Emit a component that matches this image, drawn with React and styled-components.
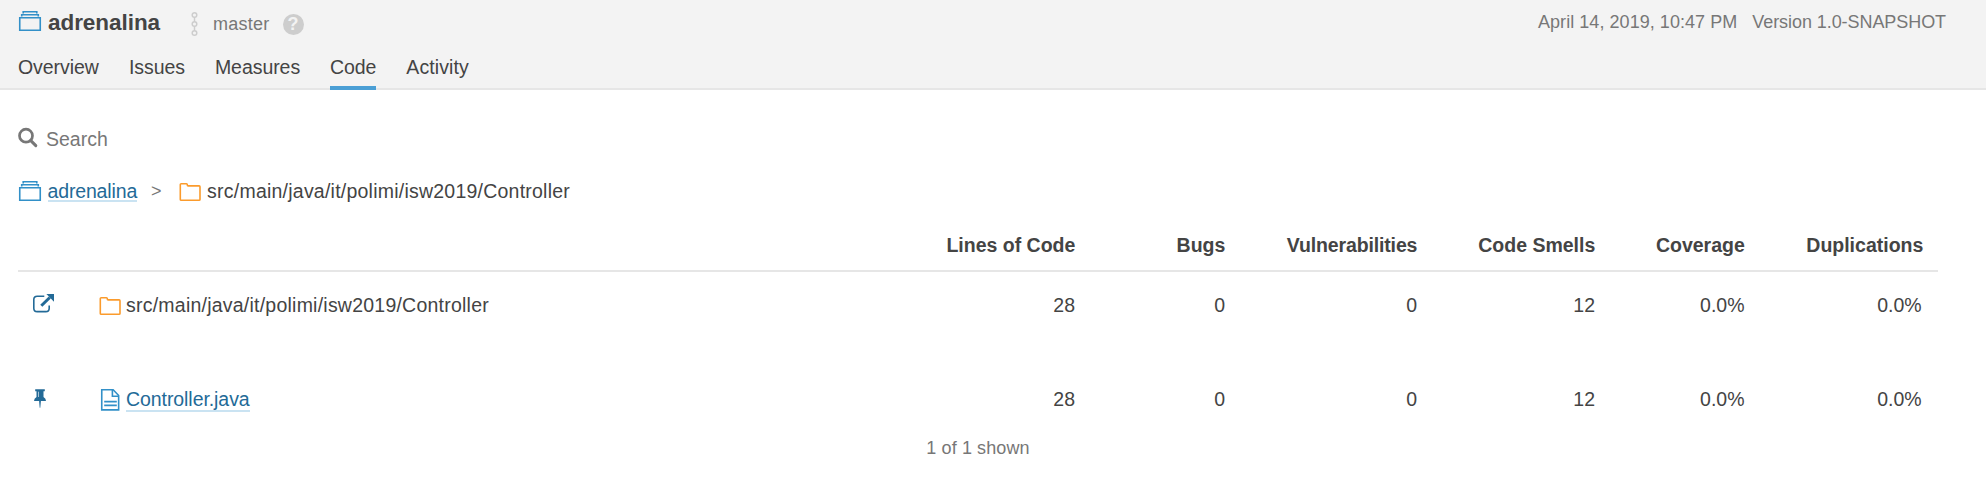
import React from "react";
import styled, { createGlobalStyle } from "styled-components";

const GlobalStyle = createGlobalStyle`
  *, *::before, *::after { box-sizing: border-box; }
  body {
    margin: 0;
    background: #fff;
    color: #444;
    font-family: "Liberation Sans", Arial, sans-serif;
    font-size: 19.5px;
    line-height: 24px;
  }
`;

const Header = styled.header`
  display: flex;
  flex-direction: column;
  justify-content: space-between;
  height: 90px;
  padding: 9px 40px 0 18px;
  background: #f3f3f3;
  border-bottom: 2px solid #e6e6e6;
`;

const HeaderTop = styled.div`
  display: flex;
  align-items: flex-start;
`;

const Title = styled.h1`
  margin: 0 31px 0 6px;
  font-size: 22.5px;
  font-weight: 700;
  line-height: 27px;
  letter-spacing: -0.05px;
`;

const Branch = styled.div`
  display: flex;
  align-items: center;
  padding-top: 3px;
  color: #777;
  font-size: 18px;
  letter-spacing: 0.25px;
`;

const BranchName = styled.span`
  margin: 0 13px 0 15px;
`;

const HelpBadge = styled.span`
  width: 21px;
  height: 21px;
  border-radius: 50%;
  background: #cdcdcd;
  color: #f3f3f3;
  font-size: 18px;
  font-weight: 700;
  line-height: 21px;
  letter-spacing: 0;
  text-align: center;
`;

const Meta = styled.div`
  display: flex;
  gap: 15px;
  margin-left: auto;
  padding-top: 1px;
  color: #777;
  font-size: 18px;
`;

const MetaItem = styled.span`
  letter-spacing: ${(p) => p.$track || "0.05px"};
`;

const Tabs = styled.nav`
  display: flex;
  gap: 30px;
  margin-bottom: -2px;
`;

const Tab = styled.a`
  padding-bottom: 7px;
  border-bottom: 4px solid ${(p) => (p.$active ? "#4b9fd5" : "transparent")};
  letter-spacing: ${(p) => p.$track || "0"};
`;

const Content = styled.main`
  padding: 37px 48px 0 18px;
`;

const SearchRow = styled.div`
  display: flex;
  gap: 4px;
  color: #777;
`;

const Breadcrumbs = styled.div`
  display: flex;
  margin-top: 28px;
`;

const Separator = styled.span`
  width: 41px;
  padding-left: 14px;
  color: #777;
  font-size: 18px;
`;

const Link = styled.a`
  height: ${(p) => p.$height};
  margin-top: 1px;
  margin-left: ${(p) => p.$gap};
  line-height: 22px;
  color: #236a97;
  border-bottom: 2px solid #cae3f2;
  letter-spacing: ${(p) => p.$track || "-0.13px"};
`;

const Path = styled.span`
  margin-left: ${(p) => p.$gap || "4px"};
  letter-spacing: 0.23px;
`;

const Table = styled.div`
  margin-top: 30px;
`;

const Row = styled.div`
  display: grid;
  grid-template-columns: 80px 1fr 150px 150px 192px 178px 149.5px 178.5px;
  align-items: center;
  height: 66px;
`;

const HeadRow = styled(Row)`
  align-items: start;
  height: 39px;
  border-bottom: 2px solid #e6e6e6;
  font-weight: 700;
`;

const Spacer = styled.div`
  height: 28px;
`;

const ActionCell = styled.div`
  display: flex;
  padding-left: 14px;
`;

const NameCell = styled.div`
  display: flex;
`;

const HeadCell = styled.div`
  padding-right: 14.7px;
  text-align: right;
  letter-spacing: ${(p) => p.$track || "0"};
`;

const ValueCell = styled.div`
  padding-right: ${(p) => p.$pad || "15px"};
  text-align: right;
`;

const Footer = styled.footer`
  margin-top: 4px;
  color: #777;
  font-size: 18px;
  letter-spacing: 0.1px;
  text-align: center;
`;

const Icon = styled.svg`
  display: block;
  flex: none;
  overflow: visible;
`;

const ProjectIcon = () => (
  <Icon width="24" height="24" viewBox="0 0 24 24" fill="none" stroke="#3290c8" strokeWidth="1.6">
    <path d="M1.75 8.75h20.5v12.5H1.75z" />
    <path d="M3.7 7.4V5.8h16.6v1.6" />
    <path d="M5.2 4.6V2.8h13.6v1.8" />
  </Icon>
);

const FolderIcon = () => (
  <Icon width="24" height="24" viewBox="0 0 24 24" fill="none" stroke="#fb9b2c" strokeWidth="1.6">
    <path d="M2.3 5.6q0-.9.9-.9h5.2q.9 0 .9.9v.5q0 .8.8.8h11q.9 0 .9.9v12.6q0 .9-.9.9H3.2q-.9 0-.9-.9z" />
  </Icon>
);

const FileIcon = () => (
  <Icon width="24" height="24" viewBox="0 0 24 24" fill="none" stroke="#3290c8" strokeWidth="1.6">
    <path d="M3.75 2.8h11.4l5.5 5.7v14.4H3.75z" />
    <path d="M14.4 3v6.3h6M6.2 14.6h12.6M6.2 18.4h12.6" />
  </Icon>
);

const SearchIcon = () => (
  <Icon width="24" height="24" viewBox="0 0 24 24" fill="none" stroke="#777">
    <circle cx="8" cy="8.7" r="6.5" strokeWidth="2.7" />
    <path d="M12.8 13.6l5 5" strokeWidth="3" strokeLinecap="round" />
  </Icon>
);

const BranchIcon = () => (
  <Icon width="7" height="24" viewBox="0 0 7 24" fill="none" stroke="#cdcdcd" strokeWidth="1.5">
    <circle cx="3.5" cy="3" r="2.3" />
    <circle cx="3.5" cy="12" r="2.3" />
    <circle cx="3.5" cy="21" r="2.3" />
    <path d="M3.5 5.3v4.4M3.5 14.3v4.4" />
  </Icon>
);

const OpenIcon = () => (
  <Icon width="24" height="24" viewBox="0 0 24 24" fill="none" stroke="#236a97">
    <path
      d="M12.3 3.2H5.2q-3.4 0-3.4 3.4v8.6q0 3.4 3.4 3.4h8.6q3.4 0 3.4-3.4v-2.6"
      strokeWidth="1.6"
    />
    <path d="M9.3 12.8l8.5-8.3" strokeWidth="3" />
    <path d="M14.4 1.1H22V8.7z" fill="#236a97" stroke="none" />
  </Icon>
);

const PinIcon = () => (
  <Icon width="24" height="24" viewBox="0 0 24 24" fill="#236a97">
    <path d="M3.2 2.3h9.6v2h-1.3v5.8q2.5 1.3 2.5 4H8.9L8.3 20.7h-.6L7.1 14.1H2q0-2.7 2.5-4V4.3H3.2z" />
    <path d="M6.5 4.7v5.3" stroke="#fff" strokeWidth=".6" />
  </Icon>
);

const PATH = "src/main/java/it/polimi/isw2019/Controller";

const tabs = [
  { label: "Overview", track: "-0.05px" },
  { label: "Issues", track: "-0.05px" },
  { label: "Measures", track: "-0.06px" },
  { label: "Code", track: "-0.1px", active: true },
  { label: "Activity", track: "0.1px" },
];

const columns = [
  { label: "Lines of Code" },
  { label: "Bugs" },
  { label: "Vulnerabilities", track: "-0.14px" },
  { label: "Code Smells", track: "0px" },
  { label: "Coverage" },
  { label: "Duplications" },
];

const values = [
  { text: "28" },
  { text: "0" },
  { text: "0" },
  { text: "12" },
  { text: "0.0%" },
  { text: "0.0%", pad: "16.3px" },
];

const Values = () =>
  values.map((v, i) => (
    <ValueCell key={i} $pad={v.pad}>
      {v.text}
    </ValueCell>
  ));

export default function App() {
  return (
    <>
      <GlobalStyle />
      <Header>
        <HeaderTop>
          <ProjectIcon />
          <Title>adrenalina</Title>
          <Branch>
            <BranchIcon />
            <BranchName>master</BranchName>
            <HelpBadge>?</HelpBadge>
          </Branch>
          <Meta>
            <MetaItem>April 14, 2019, 10:47 PM</MetaItem>
            <MetaItem $track="-0.07px">Version 1.0-SNAPSHOT</MetaItem>
          </Meta>
        </HeaderTop>
        <Tabs>
          {tabs.map((t) => (
            <Tab key={t.label} $active={t.active} $track={t.track}>
              {t.label}
            </Tab>
          ))}
        </Tabs>
      </Header>
      <Content>
        <SearchRow>
          <SearchIcon />
          <span>Search</span>
        </SearchRow>
        <Breadcrumbs>
          <ProjectIcon />
          <Link $height="22px" $gap="5.5px" $track="-0.15px">adrenalina</Link>
          <Separator>&gt;</Separator>
          <FolderIcon />
          <Path $gap="5px">{PATH}</Path>
        </Breadcrumbs>
        <Table>
          <HeadRow>
            <span />
            <span />
            {columns.map((c) => (
              <HeadCell key={c.label} $track={c.track}>
                {c.label}
              </HeadCell>
            ))}
          </HeadRow>
          <Row>
            <ActionCell>
              <OpenIcon />
            </ActionCell>
            <NameCell>
              <FolderIcon />
              <Path>{PATH}</Path>
            </NameCell>
            <Values />
          </Row>
          <Spacer />
          <Row>
            <ActionCell>
              <PinIcon />
            </ActionCell>
            <NameCell>
              <FileIcon />
              <Link $height="24px" $gap="4px" $track="-0.07px">Controller.java</Link>
            </NameCell>
            <Values />
          </Row>
        </Table>
        <Footer>1 of 1 shown</Footer>
      </Content>
    </>
  );
}
